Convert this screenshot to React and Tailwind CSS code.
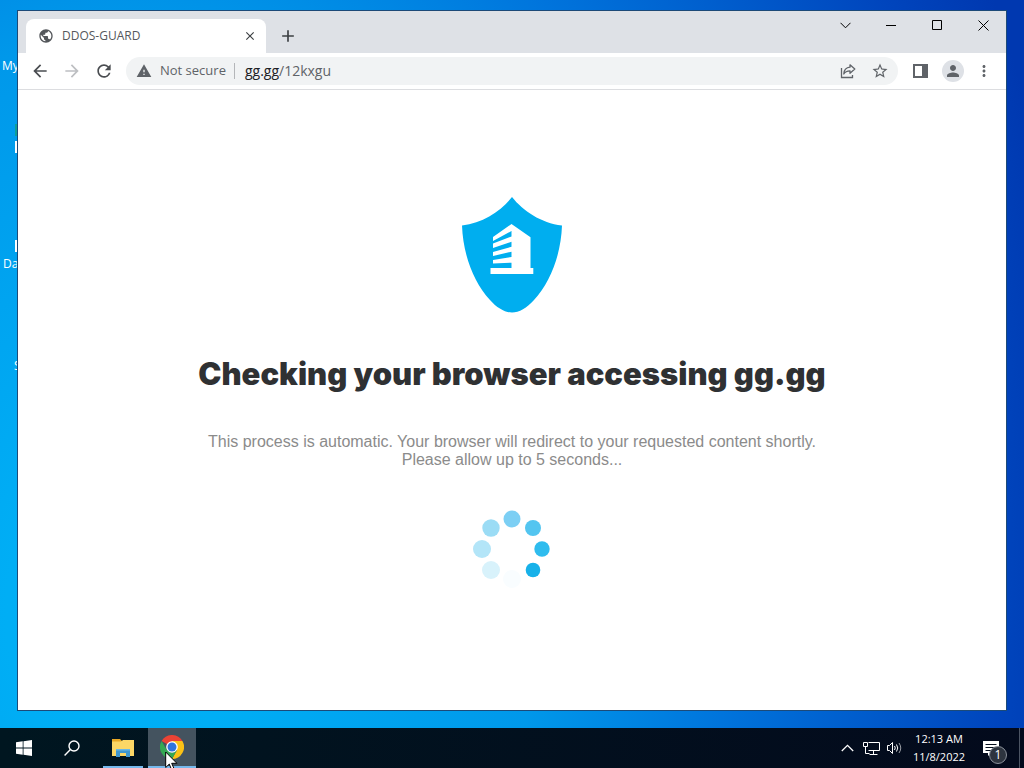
import { MdPublic, MdWarning, MdPerson, MdMoreVert, MdRefresh, MdArrowBack, MdArrowForward, MdStarBorder, MdClose, MdAdd } from 'react-icons/md';

// Spinner dots, clockwise from the top.
const DOTS = [
  { x: 39, y: 9, r: 8.5, color: '#7ccff4' },
  { x: 60, y: 18, r: 8, color: '#53c5f0' },
  { x: 69, y: 39, r: 7.7, color: '#2fbcee' },
  { x: 60, y: 60, r: 7.3, color: '#17b1e9' },
  { x: 39, y: 69, r: 9, color: '#f9fdff' },
  { x: 18, y: 60, r: 9, color: '#d8f2fb' },
  { x: 9, y: 39, r: 9, color: '#b3e5f8' },
  { x: 18, y: 18, r: 8.7, color: '#9bdcf5' },
];

function ShareIcon() {
  return (
    <svg width="16" height="16" viewBox="0 0 16 16" fill="none" stroke="#5f6368" strokeWidth="1.3">
      <path d="M1.5 5v9.5h11V12" />
      <path d="M10 1.8 14.8 6 10 10.2V7.8C7 7.8 5 8.7 3.8 11 4 7 6.5 4.5 10 4.2z" strokeLinejoin="round" />
    </svg>
  );
}

function PanelIcon() {
  return (
    <svg width="15" height="14" viewBox="0 0 15 14">
      <path fill="#5f6368" fillRule="evenodd" d="M0 0h15v14H0zM2 2v10h7V2z" />
    </svg>
  );
}

function Shield() {
  return (
    <svg width="100" height="116" viewBox="0 0 100 116" role="img" aria-label="DDOS-GUARD">
      <path fill="#00aeef" d="M50 0C61 14 79 26 100 28.5 99 58 88 86 72 103c-7 8-15 12.5-22 12.5S35 111 28 103C12 86 1 58 0 28.5 21 26 39 14 50 0z" />
      <path fill="#fff" d="M49.500 27 68.500 40.300V71h2.800v6H28.500v-6H49.500v-5.300L31 66.500V63l18.500-3v-5.300L31 59v-4l18.500-5.300v-5L31 51v-4.500l18.500-7v-5.500L31 44v-4z" />
    </svg>
  );
}

function Spinner() {
  return (
    <svg width="78" height="78" viewBox="0 0 78 78" aria-hidden="true">
      {DOTS.map((d) => <circle key={`${d.x}-${d.y}`} cx={d.x} cy={d.y} r={d.r} fill={d.color} />)}
    </svg>
  );
}

function WindowsLogo() {
  return (
    <svg width="16" height="16" viewBox="0 0 16 16" fill="#fff">
      <path d="M0 2.3 6.7 1.3v6.3H0zM7.5 1.2 16 0v7.6H7.5zM0 8.4h6.7v6.3L0 13.7zM7.5 8.4H16V16l-8.5-1.2z" />
    </svg>
  );
}

function SearchIcon() {
  return (
    <svg width="16" height="16" viewBox="0 0 16 16" fill="none" stroke="#fff" strokeWidth="1.4">
      <circle cx="10" cy="6" r="5" />
      <path d="M6.4 9.6.6 15.4" />
    </svg>
  );
}

function FolderIcon() {
  return (
    <svg width="22" height="19" viewBox="0 0 22 19">
      <path fill="#e9a825" d="M0 1h8l2 2h11v4H0z" />
      <path fill="#fcd766" d="M0 3.5h9L11 2h11v16H0z" />
      <path fill="#3f97cf" d="M4 11h14v8h-4v-4H8v4H4z" />
      <path fill="#6cb8e4" d="M4 11h14v1.5H4z" />
    </svg>
  );
}

function ChromeLogo() {
  return (
    <svg width="24" height="24" viewBox="0 0 24 24">
      <path fill="#ea4335" d="M12 12 1.6 6A12 12 0 0 1 22.4 6z" />
      <path fill="#fbc116" d="M12 12V6h10.4A12 12 0 0 1 12 24l5-9z" />
      <path fill="#34a853" d="M1.6 6 6.8 15 12 18l5-3-5 9A12 12 0 0 1 1.6 6z" />
      <circle cx="12" cy="12" r="5.8" fill="#fff" />
      <circle cx="12" cy="12" r="4.5" fill="#2f74dd" />
    </svg>
  );
}

function MousePointer() {
  return (
    <svg width="13" height="20" viewBox="0 0 13 20">
      <path fill="#fff" stroke="#000" strokeWidth="1" d="M.7 1v15.5l3.6-3.4 2.4 5.9 2.5-1-2.500-5.700h5.200z" />
    </svg>
  );
}

function NetworkIcon() {
  return (
    <svg width="17" height="15" viewBox="0 0 17 15" fill="none" stroke="#fff">
      <path d="M5.500 1.500h11v8h-11M10.500 9.500v4M6.500 13.500h8M.5 1.500h4v4h-4zM2.500 5.500v7h4" />
    </svg>
  );
}

function VolumeIcon() {
  return (
    <svg width="16" height="14" viewBox="0 0 16 14" fill="none" stroke="#fff">
      <path d="M.5 4.500h2l3-3v11l-3-3h-2z" />
      <path d="M7.500 5q1.500 2 0 4M9.500 3.500q2.500 3.500 0 7" />
      <path d="M12 2q3.500 5 0 10" opacity=".6" />
    </svg>
  );
}

function NotificationIcon() {
  return (
    <svg width="16" height="15" viewBox="0 0 16 15">
      <path fill="#fff" d="M0 0h16v12H8l-3 3v-3H0z" />
      <path stroke="#06101f" d="M2.500 3.500h11M2.500 6.500h11M2.500 9.500h7" />
    </svg>
  );
}

// Labels and icon edges that stick out to the left of the browser window.
function DesktopIcons() {
  return (
    <div className="absolute inset-y-0 left-0 w-5 overflow-hidden whitespace-nowrap text-xs text-white">
      <span className="absolute left-[2px] top-[58px]">My</span>
      <span className="absolute left-[15px] top-[124px] h-3 w-[6px] bg-[#0f9f96]" />
      <span className="absolute left-[15px] top-[141px] h-3 w-[6px] bg-white" />
      <span className="absolute left-[15px] top-[240px] h-3 w-[6px] bg-white" />
      <span className="absolute left-[3px] top-[256px]">Da</span>
      <span className="absolute left-[14px] top-[358px]">S</span>
    </div>
  );
}

function TabStrip() {
  return (
    <div className="flex h-[42px] items-start bg-[#dee1e6] pl-2">
      <div className="mt-2 flex h-[34px] w-60 items-center rounded-t-lg bg-white pl-3 pr-2">
        <MdPublic className="size-4 text-[#54575b]" />
        <span className="ml-2 flex-1 text-xs text-[#55585c]">DDOS-GUARD</span>
        <button aria-label="Close tab" className="flex size-4 items-center justify-center text-[#3c4043]">
          <MdClose className="size-[14px]" />
        </button>
      </div>
      <button aria-label="New tab" className="mt-[11px] ml-2 flex size-7 items-center justify-center text-[#3c4043]">
        <MdAdd className="size-5" />
      </button>
      <div className="ml-auto flex text-black">
        <button aria-label="Search tabs" className="flex h-7 w-[46px] items-center justify-center">
          <svg width="11" height="7" viewBox="0 0 11 7" fill="none"><path stroke="currentColor" d="m.5.8 5 5 5-5" /></svg>
        </button>
        <button aria-label="Minimize" className="flex h-7 w-[46px] items-center justify-center">
          <svg width="10" height="10" viewBox="0 0 10 10"><path stroke="currentColor" d="M0 5.500h10" /></svg>
        </button>
        <button aria-label="Maximize" className="flex h-7 w-[46px] items-center justify-center">
          <svg width="10" height="10" viewBox="0 0 10 10" fill="none"><path stroke="currentColor" d="M.5.5h9v9h-9z" /></svg>
        </button>
        <button aria-label="Close" className="flex h-7 w-[46px] items-center justify-center">
          <svg width="11" height="11" viewBox="0 0 11 11"><path stroke="currentColor" d="m.5.5 10 10M10.500.5l-10 10" /></svg>
        </button>
      </div>
    </div>
  );
}

function Toolbar() {
  return (
    <div className="flex h-[37px] items-center border-b border-[#dcdde0] px-3 text-[#5f6368]">
      <button aria-label="Back" className="flex size-5 items-center justify-center text-[#4a4d51]"><MdArrowBack className="size-5" /></button>
      <button aria-label="Forward" className="ml-3 flex size-5 items-center justify-center text-[#bdbfc2]"><MdArrowForward className="size-5" /></button>
      <button aria-label="Reload" className="ml-3 flex size-5 items-center justify-center text-[#4a4d51]"><MdRefresh className="size-5" /></button>
      <div className="ml-3 flex h-7 flex-1 items-center rounded-full bg-[#f1f3f4] pr-2 pl-[10px]">
        <MdWarning className="size-4" />
        <span className="ml-2 text-[13px]">Not secure</span>
        <span className="ml-2 h-4 w-px bg-[#b4b6b9]" />
        <span className="ml-[10px] flex-1 text-sm"><span className="text-[#202124]">gg.gg</span>/12kxgu</span>
        <button aria-label="Share" className="flex size-5 items-center justify-center"><ShareIcon /></button>
        <button aria-label="Bookmark" className="ml-3 flex size-5 items-center justify-center"><MdStarBorder className="size-[18px]" /></button>
      </div>
      <button aria-label="Side panel" className="ml-3 flex size-5 items-center justify-center"><PanelIcon /></button>
      <button aria-label="Profile" className="ml-3 flex size-[22px] items-center justify-center rounded-full bg-[#dee1e6]"><MdPerson className="size-[18px]" /></button>
      <button aria-label="Menu" className="ml-[10px] flex size-5 items-center justify-center"><MdMoreVert className="size-[18px]" /></button>
    </div>
  );
}

function Taskbar() {
  return (
    <footer className="relative flex h-10 shrink-0 items-stretch bg-linear-to-r from-[#001620] to-[#030a1c] text-white">
      <button aria-label="Start" className="flex w-12 items-center justify-center"><WindowsLogo /></button>
      <button aria-label="Search" className="flex w-12 items-center justify-center"><SearchIcon /></button>
      <button aria-label="File Explorer" className="ml-[7px] flex w-10 items-center justify-center border-b-2 border-[#76b9ed]"><FolderIcon /></button>
      <button aria-label="Google Chrome" className="ml-[5px] flex w-12 items-center justify-center border-b-2 border-[#76b9ed] bg-[#44535f]"><ChromeLogo /></button>
      <div className="ml-auto flex items-center">
        <button aria-label="Show hidden icons" className="flex w-6 justify-center">
          <svg width="13" height="8" viewBox="0 0 13 8" fill="none"><path stroke="currentColor" strokeWidth="1.3" d="m.8 7 5.700-5.700L12.200 7" /></svg>
        </button>
        <button aria-label="Network" className="flex w-6 justify-center"><NetworkIcon /></button>
        <button aria-label="Volume" className="flex w-6 justify-center"><VolumeIcon /></button>
        <div className="w-16 text-center text-[11px] leading-[18px]">
          <p>12:13 AM</p>
          <p>11/8/2022</p>
        </div>
        <button aria-label="Notifications" className="relative flex h-10 w-10 items-center justify-center">
          <NotificationIcon />
          <span className="absolute right-1 bottom-1 flex size-[18px] items-center justify-center rounded-full border border-[#8b919b] bg-[#2d343f] text-xs">1</span>
        </button>
        <span className="ml-2 h-10 w-[5px] border-l border-[#4c5463]" />
      </div>
      <div className="pointer-events-none absolute left-[165px] top-[23px] h-[17px] overflow-hidden"><MousePointer /></div>
    </footer>
  );
}

export default function App() {
  return (
    <div className="relative flex h-screen flex-col overflow-hidden bg-[radial-gradient(95%_180%_at_12%_80%,#00b0f8_0%,#00aef5_12%,#0098ea_42%,#0074dc_62%,#0045bd_90%,#0038b0_100%)] font-['Open_Sans','Liberation_Sans',sans-serif]">
      <DesktopIcons />
      <div className="relative mx-[17px] mt-[10px] mb-[17px] flex flex-1 flex-col border border-[#1c4a78] bg-white">
        <TabStrip />
        <Toolbar />
        <main className="flex flex-1 flex-col items-center pt-[107px] text-center">
          <Shield />
          <h1 className="mt-10 font-['Inter','Liberation_Sans',sans-serif] text-[31px] font-black leading-[42px] text-[#2f3133]">Checking your browser accessing gg.gg</h1>
          <p className="mt-[38px] font-['Liberation_Sans',sans-serif] text-base leading-[18px] text-[#8b8b8b]">
            This process is automatic. Your browser will redirect to your requested content shortly.
            <br />
            Please allow up to 5 seconds...
          </p>
          <div className="mt-[41px]"><Spinner /></div>
        </main>
      </div>
      <Taskbar />
    </div>
  );
}
